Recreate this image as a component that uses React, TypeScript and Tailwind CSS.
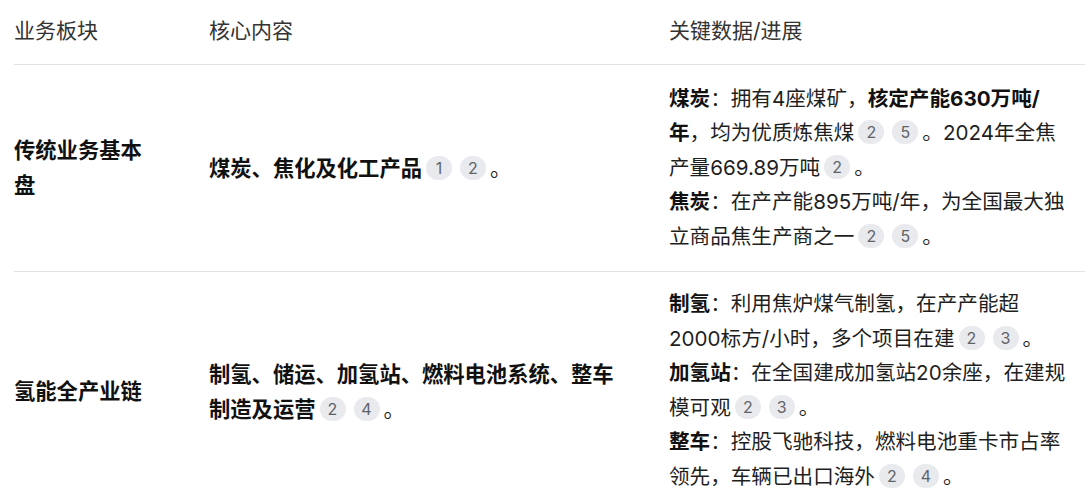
import React from "react";

const Cite = ({ n }: { n: number }) => (
  <span className="inline-flex items-center justify-center h-[24px] min-w-[26px] px-[6px] mx-[4px] rounded-full bg-[#e8eaee] text-[16px] leading-none text-[#5f6368] align-[2px] font-normal">
    {n}
  </span>
);

const B = ({ children }: { children: React.ReactNode }) => (
  <b className="font-bold text-[#111]">{children}</b>
);

export default function App() {
  return (
    <div
      className="w-[1090px] h-[498px] overflow-hidden bg-white pl-[14px] pr-[5px] text-[20.6px] text-[#1f1f1f]"
      style={{ fontFamily: 'Inter, "Noto Sans CJK SC", sans-serif' }}
    >
      <table className="w-full border-collapse table-fixed">
        <colgroup>
          <col className="w-[195px]" />
          <col className="w-[460px]" />
          <col />
        </colgroup>
        <thead>
          <tr className="border-b border-[#e3e3e3] h-[64px]">
            <th className="text-left font-normal text-[#333] align-middle pr-[57px] pb-[3px] text-[21px]">业务板块</th>
            <th className="text-left font-normal text-[#333] align-middle pr-[50px] pb-[3px] text-[21px]">核心内容</th>
            <th className="text-left font-normal text-[#333] align-middle pr-[4px] pb-[3px] text-[21px]">关键数据/进展</th>
          </tr>
        </thead>
        <tbody className="leading-[34.5px]">
          <tr className="border-b border-[#e3e3e3]">
            <td className="align-middle pr-[57px] font-bold text-[#111] text-[21.3px]">传统业务基本盘</td>
            <td className="align-middle pr-[50px] text-[21.3px]">
              <span className="font-bold text-[#111]">煤炭、焦化及化工产品</span>
              <Cite n={1} />
              <Cite n={2} />。
            </td>
            <td className="align-middle pr-[4px] pt-[17px] pb-[17px] whitespace-nowrap">
              <p>
                <B>煤炭</B>：拥有4座煤矿，<B>核定产能630万吨/</B>
                <br />
                <B>年</B>，均为优质炼焦煤
                <Cite n={2} />
                <Cite n={5} />。2024年全焦
                <br />
                产量669.89万吨
                <Cite n={2} />。
              </p>
              <p>
                <B>焦炭</B>：在产产能895万吨/年，为全国最大独
                <br />
                立商品焦生产商之一
                <Cite n={2} />
                <Cite n={5} />。
              </p>
            </td>
          </tr>
          <tr>
            <td className="align-middle pr-[57px] font-bold text-[#111] text-[21.3px]">氢能全产业链</td>
            <td className="align-middle pr-[50px] text-[21.3px]">
              <span className="font-bold text-[#111]">制氢、储运、加氢站、燃料电池系统、整车制造及运营</span>
              <Cite n={2} />
              <Cite n={4} />。
            </td>
            <td className="align-middle pr-[4px] pt-[15px] pb-[17px] whitespace-nowrap">
              <p>
                <B>制氢</B>：利用焦炉煤气制氢，在产产能超
                <br />
                2000标方/小时，多个项目在建
                <Cite n={2} />
                <Cite n={3} />。
              </p>
              <p>
                <B>加氢站</B>：在全国建成加氢站20余座，在建规
                <br />
                模可观
                <Cite n={2} />
                <Cite n={3} />。
              </p>
              <p>
                <B>整车</B>：控股飞驰科技，燃料电池重卡市占率
                <br />
                领先，车辆已出口海外
                <Cite n={2} />
                <Cite n={4} />。
              </p>
            </td>
          </tr>
        </tbody>
      </table>
    </div>
  );
}
